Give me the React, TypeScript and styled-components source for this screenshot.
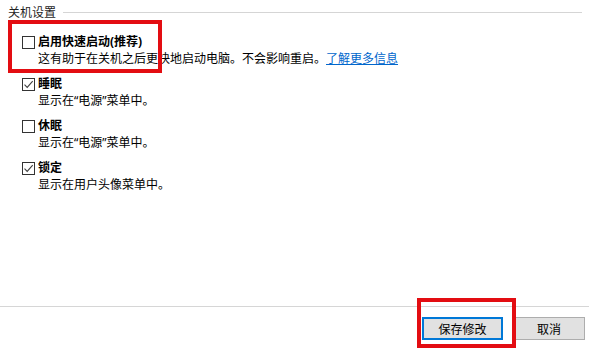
import React from 'react';
import styled, { createGlobalStyle } from 'styled-components';

const GlobalStyle = createGlobalStyle`
  html, body {
    margin: 0;
    padding: 0;
    background: #ffffff;
  }

  body {
    font-family: "Noto Sans", "Noto Sans CJK SC", sans-serif;
    font-size: 12px;
    color: #000000;
  }
`;

interface OptionData {
  id: string;
  label: string;
  checked: boolean;
  description: string;
  link?: string;
  highlighted?: boolean;
}

const OPTIONS: OptionData[] = [
  {
    id: 'fast-startup',
    label: '启用快速启动(推荐)',
    checked: false,
    description: '这有助于在关机之后更快地启动电脑。不会影响重启。',
    link: '了解更多信息',
    highlighted: true,
  },
  { id: 'sleep', label: '睡眠', checked: true, description: '显示在“电源”菜单中。' },
  { id: 'hibernate', label: '休眠', checked: false, description: '显示在“电源”菜单中。' },
  { id: 'lock', label: '锁定', checked: true, description: '显示在用户头像菜单中。' },
];

const CheckMark: React.FC = () => (
  <svg width="11" height="11" viewBox="0 0 11 11">
    <polyline points="1.5,5.6 4.2,8.4 9.7,2.2" fill="none" stroke="#404040" strokeWidth="1.1" />
  </svg>
);

const OptionItem: React.FC<{ option: OptionData }> = ({ option }) => (
  <Option>
    {option.highlighted && <Highlight $top={-13} $left={-14} $width={154} $height={53} />}
    <OptionRow>
      <CheckBox>{option.checked && <CheckMark />}</CheckBox>
      <OptionLabel>{option.label}</OptionLabel>
    </OptionRow>
    <Description>
      {option.description}
      {option.link && <MoreLink href="#">{option.link}</MoreLink>}
    </Description>
  </Option>
);

export default function App() {
  return (
    <>
      <GlobalStyle />
      <Window>
        <Settings>
          <GroupHeader>
            <GroupTitle>关机设置</GroupTitle>
            <GroupRule />
          </GroupHeader>
          <OptionList>
            {OPTIONS.map(option => <OptionItem key={option.id} option={option} />)}
          </OptionList>
        </Settings>
        <Footer>
          <ButtonSlot>
            <Highlight $top={-19} $left={-5} $width={99} $height={50} />
            <Button $primary>保存修改</Button>
          </ButtonSlot>
          <Button>取消</Button>
        </Footer>
      </Window>
    </>
  );
}

const Window = styled.div`
  width: 589px;
  height: 350px;
  display: flex;
  flex-direction: column;
  overflow: hidden;
`;

const Settings = styled.div`
  flex: 1;
  display: flex;
  flex-direction: column;
  padding: 4px 7px 0 8px;
`;

const GroupHeader = styled.div`
  display: flex;
  align-items: center;
  gap: 7px;
  height: 17px;
`;

const GroupTitle = styled.span`
  line-height: 17px;
  color: #1e1e1e;
`;

const GroupRule = styled.div`
  flex: 1;
  height: 1px;
  background: #d5d5d5;
`;

const OptionList = styled.div`
  display: flex;
  flex-direction: column;
  gap: 8px;
  margin-top: 12px;
  padding-left: 14px;
`;

const Option = styled.div`
  position: relative;
  display: flex;
  flex-direction: column;
`;

const OptionRow = styled.div`
  display: flex;
  align-items: center;
  height: 17px;
`;

const CheckBox = styled.span`
  box-sizing: border-box;
  width: 13px;
  height: 13px;
  margin-top: 2px;
  border: 1px solid #333333;
  background: #ffffff;
  display: flex;
  align-items: center;
  justify-content: center;
`;

const OptionLabel = styled.span`
  margin-left: 3px;
  font-weight: 700;
  line-height: 17px;
`;

const Description = styled.div`
  padding-left: 16px;
  line-height: 17px;
`;

const MoreLink = styled.a`
  color: #0066cc;
  text-decoration: underline;
`;

const Highlight = styled.div<{ $top: number; $left: number; $width: number; $height: number }>`
  position: absolute;
  box-sizing: border-box;
  top: ${p => p.$top}px;
  left: ${p => p.$left}px;
  width: ${p => p.$width}px;
  height: ${p => p.$height}px;
  border: 4px solid #e30d12;
  pointer-events: none;
`;

const Footer = styled.div`
  display: flex;
  justify-content: flex-end;
  align-items: flex-start;
  gap: 10px;
  height: 44px;
  padding: 10px 4px 0 0;
  box-sizing: border-box;
  border-top: 1px solid #d6d6d6;
`;

const ButtonSlot = styled.div`
  position: relative;
  display: flex;
`;

const Button = styled.button<{ $primary?: boolean }>`
  box-sizing: border-box;
  height: 23px;
  width: ${p => (p.$primary ? '81px' : '72px')};
  padding: 0;
  font-family: inherit;
  font-size: 12px;
  color: #000000;
  background: #e1e1e1;
  border: ${p => (p.$primary ? '2px solid #0078d7' : '1px solid #adadad')};
  cursor: pointer;
`;
